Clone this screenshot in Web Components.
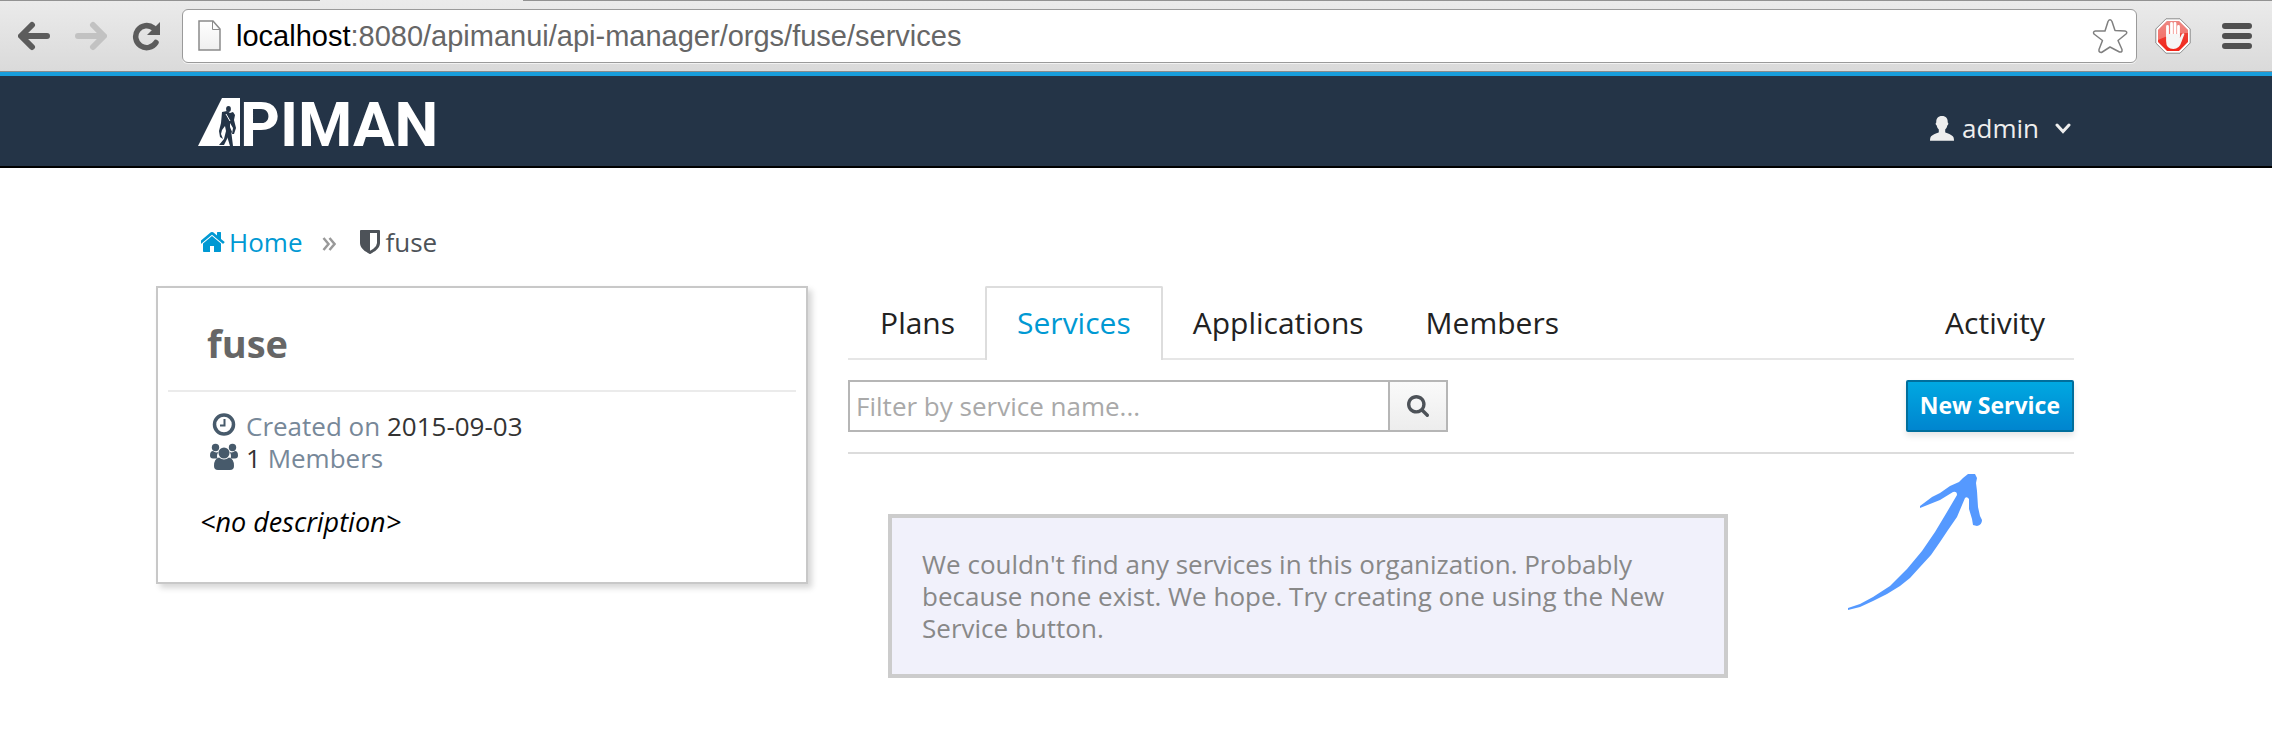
<!DOCTYPE html>
<html lang="en">
<head>
<meta charset="utf-8">
<title>apiman - fuse services</title>
<style>
  html, body { margin: 0; background: #fff; }
  body { font: 26px/32px "Open Sans", "Noto Sans", sans-serif; color: #333; }
</style>
</head>
<body>
<browser-bar></browser-bar>
<app-header>admin</app-header>
<org-page>
  <bread-crumbs slot="crumbs"></bread-crumbs>
  <org-card slot="side"></org-card>
  <tab-strip slot="main"></tab-strip>
  <service-filter slot="main"></service-filter>
  <empty-note slot="main">We couldn't find any services in this organization. Probably because none exist. We hope. Try creating one using the New Service button.</empty-note>
</org-page>

<script>
const define = (name, html) => customElements.define(name, class extends HTMLElement {
  constructor() {
    super();
    const t = document.createElement('template');
    t.innerHTML = '<style>*{box-sizing:border-box}button,input{font:inherit;margin:0}button{cursor:pointer}svg{display:block;flex:none}a{text-decoration:none;color:inherit}</style>' + html;
    this.attachShadow({ mode: 'open' }).append(t.content.cloneNode(true));
  }
});

define('browser-bar', `
<style>
  :host { display: flex; align-items: center; height: 72px; box-sizing: border-box; padding: 0 20px 0 18px;
    background: linear-gradient(#ebebeb, #dadada); border-bottom: 1px solid #8b8b8b; position: relative; }
  :host::before { content: ""; position: absolute; inset: 0 0 auto 0; height: 1px;
    background: linear-gradient(90deg, #929292 320px, transparent 320px 523px, #929292 523px); }
  button { border: 0; padding: 0; background: none; }
  nav { display: flex; gap: 25px; margin-right: 20px; }
  .box { flex: 1; display: flex; align-items: center; height: 54px; background: #fff; border: 1px solid #9a9a9a;
    border-radius: 6px; padding: 0 8px 0 15px; box-shadow: 0 1px 0 #f3f3f3; }
  .url { flex: 1; margin-left: 14px; font: 29px/32px "Liberation Sans", Arial, sans-serif; color: #666; outline: 0; white-space: nowrap; }
  b { font-weight: 400; color: #000; }
  .ext { margin: 0 31px 0 18px; }
</style>
<nav aria-label="History">
  <button aria-label="Back"><svg width="32" height="30" viewBox="0 0 32 30"><path d="M14 4 3 15l11 11M4 15h25" fill="none" stroke="#5c5c5c" stroke-width="6" stroke-linecap="round" stroke-linejoin="round"/></svg></button>
  <button aria-label="Forward"><svg width="32" height="30" viewBox="0 0 32 30"><path d="M18 4l11 11-11 11M28 15H3" fill="none" stroke="#c2c2c2" stroke-width="6" stroke-linecap="round" stroke-linejoin="round"/></svg></button>
  <button aria-label="Reload"><svg width="30" height="30" viewBox="0 0 30 30"><path d="M24 21.500A11 11 0 1 1 21.500 7" fill="none" stroke="#5c5c5c" stroke-width="5.500" stroke-linecap="round"/><path d="M28 1v13H15z" fill="#5c5c5c"/></svg></button>
</nav>
<div class="box">
  <svg width="24" height="34" viewBox="0 0 24 34"><defs><linearGradient id="p" x2="0" y2="1"><stop stop-color="#fff"/><stop offset="1" stop-color="#efefef"/></linearGradient></defs><path d="M1 2h14l7 8v21H1z" fill="url(#p)" stroke="#8a8a8a" stroke-width="1.500"/><path d="M14.500 2v8.500H22" fill="none" stroke="#8a8a8a"/></svg>
  <div class="url" role="textbox" aria-label="Address" contenteditable="true" spellcheck="false"><b>localhost</b>:8080/apimanui/api-manager/orgs/fuse/services</div>
  <button aria-label="Bookmark"><svg width="36" height="36" viewBox="0 0 36 36"><path d="M16 3.500q2-3.500 4 0l3 9 10 .5q3 .8 1 3l-8 6.500 4 9q.5 3-2.500 2.500L18 29l-8.500 5.500q-3 0-2.500-3l3.500-9L2 16q-1.500-2.500 1.500-3H13z" fill="#fff" stroke="#808080" stroke-width="1.500" stroke-linejoin="round"/></svg></button>
</div>
<button class="ext" aria-label="Ad blocker"><svg width="36" height="36" viewBox="0 0 36 36"><defs><linearGradient id="r" x2="0" y2="1"><stop stop-color="#e5554d"/><stop offset=".5" stop-color="#ee3a30"/><stop offset="1" stop-color="#f2261a"/></linearGradient></defs><path d="M11 .8h14L35.200 11v14L25 35.200H11L.8 25V11z" fill="#fff" stroke="#8a8a8a"/><path d="M12 3h12l9 9v12l-9 9H12l-9-9V12z" fill="url(#r)"/><path d="M3 12l9-9h12l9 9v3q-14-1-30 7z" fill="#fff" opacity=".3"/><path d="M12.500 18V8.500M16.500 17V5.500M20 17V5.500M23.500 18V8.500" stroke="#fff" stroke-width="2.800" stroke-linecap="round"/><path d="M11.100 16h13.800v4l2-4q2-1.500 2.500 0l-3 8q-2 7-8 7-7.300 0-7.300-8z" fill="#f6f6f6"/></svg></button>
<button aria-label="Menu"><svg width="30" height="26" viewBox="0 0 30 26"><path d="M3 3h24M3 13h24M3 23h24" stroke="#505050" stroke-width="6" stroke-linecap="round"/></svg></button>`);

define('app-header', `
<style>
  :host { display: flex; justify-content: space-between; align-items: center; height: 96px; box-sizing: border-box;
    padding: 4px 198px 0; background: #243447; border-top: 4px solid #189ddb; border-bottom: 2px solid #000; }
  .logo { display: flex; align-items: baseline; font: 700 62px/48px Roboto, sans-serif; color: #fff; }
  button { display: flex; align-items: center; gap: 8px; margin: 10px 0 0; border: 0; padding: 0 3px 0 0; background: none; color: #eee; }
  .v { margin-left: 8px; }
</style>
<a class="logo" href="#" aria-label="APIMAN"><svg width="42" height="48" viewBox="0 0 42 48"><path d="M24 0h18v48H0z" fill="#fff"/><g fill="#243447"><ellipse cx="30.500" cy="11" rx="2.400" ry="3"/><path d="M24 14l5-1 3 2 3-1 2 3-1 5 2 8-2 6h-2l1-6-3-5 0 4 2 5-4 5-4 8h-5l5-6 2-8-1-5-3 4-1 4 2 5-3-2-1-6 2-8z"/><path d="M29 38l4-6 1 8 1 8h-3z"/></g><path d="M28 16l4 7" stroke="#fff" stroke-width="1"/></svg>PIMAN</a>
<button aria-haspopup="true"><svg width="24" height="25" viewBox="0 0 24 25"><path d="M12 0c4 0 6 2.500 5.700 6.500 1 .2.800 2.500-.4 3-.3 2-1.300 3.300-2.100 4v2.700c1.300 1 7 2.300 8.300 5 .4 1 .5 2.300.5 3.500H0c0-1.200.1-2.500.5-3.500 1.300-2.700 7-4 8.300-5v-2.700c-.8-.7-1.800-2-2.100-4-1.200-.5-1.400-2.800-.4-3C6 2.500 8 0 12 0z" fill="#eee"/></svg><span><slot></slot></span><svg class="v" width="16" height="11" viewBox="0 0 16 11"><path d="M2 2l6 6.500L14 2" fill="none" stroke="#eee" stroke-width="3" stroke-linecap="round"/></svg></button>`);

define('org-page', `
<style>
  :host { display: block; padding: 58px 198px 54px 156px; }
  .grid { display: grid; grid-template-columns: minmax(0, 1fr) minmax(0, 1.88fr); gap: 40px; align-items: start; margin-top: 28px; }
</style>
<slot name="crumbs"></slot>
<div class="grid"><slot name="side"></slot><main><slot name="main"></slot></main></div>`);

define('bread-crumbs', `
<style>
  :host { display: block; padding-left: 45px; }
  nav { display: flex; align-items: center; color: #4d5258; }
  a, span { display: flex; align-items: center; gap: 5px; }
  a { color: #0099d3; gap: 4px; }
  .sep { margin: 4px 24px 0 20px; }
</style>
<nav aria-label="Breadcrumb">
  <a href="#"><svg width="24" height="20" viewBox="153 256 1486 1280" fill="currentColor"><path d="M1408 992v480q0 26-19 45t-45 19h-384v-384h-256v384h-384q-26 0-45-19t-19-45v-480q0-1 .5-3t.5-3l575-474 575 474q1 2 1 6zm223-69l-62 74q-8 9-21 11h-3q-13 0-21-7l-692-577-692 577q-12 8-24 7-13-2-21-11l-62-74q-8-10-7-23.500t11-21.500l719-599q32-26 76-26t76 26l244 204v-195q0-14 9-23t23-9h192q14 0 23 9t9 23v408l219 182q10 8 11 21.500t-7 23.500z"/></svg>Home</a>
  <svg class="sep" width="14" height="14" viewBox="0 0 14 14"><path d="M1.500 1l5 6-5 6M7.500 1l5 6-5 6" fill="none" stroke="#999" stroke-width="2.500"/></svg>
  <span><svg width="20" height="24" viewBox="256 128 1280 1536" fill="currentColor"><path d="M1344 960v-640h-448v1137q119-63 213-137 235-184 235-360zm192-768v768q0 86-33.500 170.500t-83 150-118 127.500-126.500 103-121 77.500-89.500 49.500-42.500 20q-12 6-26 6t-26-6q-16-7-42.500-20t-89.500-49.500-121-77.500-126.500-103-118-127.500-83-150-33.500-170.500v-768q0-26 19-45t45-19h1152q26 0 45 19t19 45z"/></svg>fuse</span>
</nav>`);

define('org-card', `
<style>
  :host { display: block; box-sizing: border-box; border: 2px solid #c8c8c8; padding: 32px 10px 44px; background: #fff;
    box-shadow: 4px 4px 6px rgba(0,0,0,.16); }
  h2 { margin: 0; padding: 0 39px 24px; border-bottom: 2px solid #ebebeb; font-size: 38px; line-height: 46px; color: #666; }
  ul { list-style: none; margin: 18px 0 32px; padding: 0 42px; color: #778899; }
  li { display: flex; }
  svg { margin-right: 8px; }
  b { font-weight: 400; color: #333; }
  p { margin: 0; padding: 0 32px; font-size: 27px; font-style: italic; color: #000; }
</style>
<h2>fuse</h2>
<ul>
  <li><svg width="28" height="32" viewBox="0 0 28 32"><circle cx="14" cy="14.500" r="9.500" fill="none" stroke="#475a6b" stroke-width="3.500"/><path d="M14.500 9v6.500H10" fill="none" stroke="#475a6b" stroke-width="2"/></svg><span>Created on <b>2015-09-03</b></span></li>
  <li><svg width="28" height="32" viewBox="0 0 28 32" fill="#475a6b"><circle cx="5.500" cy="5.500" r="3.700"/><circle cx="22.500" cy="5.500" r="3.700"/><path d="M3 9q3 2.500 6 .5-3 3-1.500 7H3q-3 0-3-3 0-4.500 3-4.500zM25 9q-3 2.500-6 .5 3 3 1.500 7H25q3 0 3-3 0-4.500-3-4.500z"/><circle cx="14" cy="11" r="5.500"/><path d="M9 15.500q5 4 10 0 5 1 5 8.500 0 4-4 4H8q-4 0-4-4 0-7.500 5-8.500z"/></svg><span><b>1</b> Members</span></li>
</ul>
<p>&lt;no description&gt;</p>`);

define('tab-strip', `
<style>
  :host { display: block; }
  nav { display: flex; border-bottom: 2px solid #e6e6e6; font-size: 30px; line-height: 40px; color: #222; }
  a { padding: 15px 30px; border: 2px solid transparent; border-bottom: 0; margin-right: -2px; }
  a[aria-current] { position: relative; color: #0099d3; border-color: #ddd; border-radius: 2px 2px 0 0; margin-bottom: -2px; padding-bottom: 17px; background: #fff; }
  a:last-child { margin: 0 0 0 auto; padding-right: 27px; }
</style>
<nav aria-label="Organization"><a href="#">Plans</a><a href="#" aria-current="page">Services</a><a href="#">Applications</a><a href="#">Members</a><a href="#">Activity</a></nav>`);

define('service-filter', `
<style>
  :host { display: flex; justify-content: space-between; margin-top: 20px; padding-bottom: 20px; border-bottom: 2px solid #dcdcdc; position: relative; }
  form { display: flex; flex: 0 1 600px; min-width: 0; }
  input { flex: 1; min-width: 0; height: 52px; padding: 0 6px; border: 2px solid #b6b6b6; color: #333; background: #fff; }
  input::placeholder { color: #a9a9a9; opacity: 1; }
  .find { width: 60px; margin-left: -2px; display: grid; place-items: center; border: 2px solid #b6b6b6; background: linear-gradient(#fafafa, #ededed); padding: 0; }
  .new { height: 52px; padding: 0 12px 2px; border: 2px solid #006e9c; border-radius: 2px; color: #fff; font-weight: 700; font-size: 23px;
    background: linear-gradient(#00a8e1, #0085cf); box-shadow: 0 4px 6px rgba(0,0,0,.1); white-space: nowrap; }
  .hint { position: absolute; right: 90px; top: 94px; }
</style>
<form role="search">
  <input type="text" aria-label="Filter by service name" placeholder="Filter by service name...">
  <button class="find" type="button" aria-label="Search"><svg width="22" height="22" viewBox="64 128 1664 1664" fill="#4d5258"><path d="M1216 832q0-185-131.500-316.500t-316.500-131.500-316.500 131.500-131.500 316.500 131.500 316.500 316.500 131.500 316.500-131.500 131.500-316.500zm512 832q0 52-38 90t-90 38q-54 0-90-38l-343-342q-179 124-399 124-143 0-273.500-55.500t-225-150-150-225-55.500-273.500 55.500-273.500 150-225 225-150 273.500-55.500 273.500 55.500 225 150 150 225 55.500 273.500q0 220-124 399l343 343q37 37 37 90z"/></svg></button>
</form>
<button class="new" type="button">New Service</button>
<svg class="hint" width="136" height="138" viewBox="0 0 136 138"><path d="M120 0H127L129 4 128 9 129 17 130 33 132 42 134 46Q134 51 129 52L125 51 124 45 121 35V25Q119 22 117 24L109 43 100 56 92 68 83 81 72 93 62 104 52 112 39 120 25 127 12 133 0 136V134L12 130 25 123 42 112 59 95 74 77 87 58 99 38 109 21Q109 17 105 18L92 26 82 30 72 34V32L84 23 92 19 102 12 111 8 115 4Z" fill="#5599ff"/></svg>`);

define('empty-note', `
<style>
  :host { display: block; box-sizing: border-box; max-width: 840px; margin: 60px 0 0 40px; padding: 30px; border: 4px solid #ccc;
    background: #f1f1fb; color: #888; }
</style>
<slot></slot>`);
</script>
</body>
</html>
